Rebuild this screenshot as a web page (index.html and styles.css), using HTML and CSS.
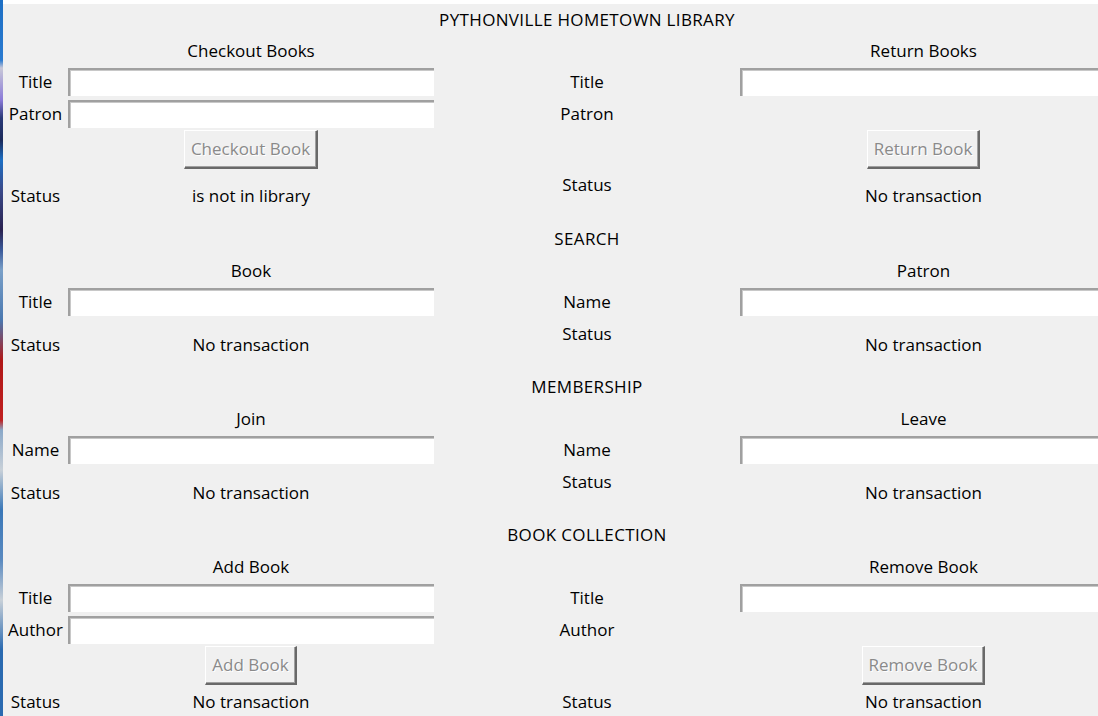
FILE: index.html
```html
<!DOCTYPE html>
<html>
<head>
<meta charset="utf-8">
<title>Pythonville Hometown Library</title>
<link rel="stylesheet" href="styles.css">
</head>
<body>
<div class="screen">
  <div class="desktop"></div>
  <main class="window">
    <section class="section section-first">
      <div class="row row-head"><span class="c2">PYTHONVILLE HOMETOWN LIBRARY</span></div>
      <div class="row row-sub"><span class="c1">Checkout Books</span><span class="c3">Return Books</span></div>
      <div class="row row-field"><span class="c0">Title</span><input class="entry c1" type="text"><span class="c2">Title</span><input class="entry c3" type="text"></div>
      <div class="row row-field"><span class="c0">Patron</span><input class="entry c1" type="text"><span class="c2">Patron</span></div>
      <div class="row row-btn"><button class="btn c1" disabled>Checkout Book</button><button class="btn c3" disabled>Return Book</button></div>
      <div class="row row-status"><span class="c0">Status</span><span class="c1">is not in library</span><span class="c2 mid-status">Status</span><span class="c3">No transaction</span></div>
    </section>

    <section class="section">
      <div class="row row-head"><span class="c2">SEARCH</span></div>
      <div class="row row-sub"><span class="c1">Book</span><span class="c3">Patron</span></div>
      <div class="row row-field"><span class="c0">Title</span><input class="entry c1" type="text"><span class="c2">Name</span><input class="entry c3" type="text"></div>
      <div class="row row-status"><span class="c0">Status</span><span class="c1">No transaction</span><span class="c2 mid-status">Status</span><span class="c3">No transaction</span></div>
    </section>

    <section class="section">
      <div class="row row-head"><span class="c2">MEMBERSHIP</span></div>
      <div class="row row-sub"><span class="c1">Join</span><span class="c3">Leave</span></div>
      <div class="row row-field"><span class="c0">Name</span><input class="entry c1" type="text"><span class="c2">Name</span><input class="entry c3" type="text"></div>
      <div class="row row-status"><span class="c0">Status</span><span class="c1">No transaction</span><span class="c2 mid-status">Status</span><span class="c3">No transaction</span></div>
    </section>

    <section class="section">
      <div class="row row-head"><span class="c2">BOOK COLLECTION</span></div>
      <div class="row row-sub"><span class="c1">Add Book</span><span class="c3">Remove Book</span></div>
      <div class="row row-field"><span class="c0">Title</span><input class="entry c1" type="text"><span class="c2">Title</span><input class="entry c3" type="text"></div>
      <div class="row row-field"><span class="c0">Author</span><input class="entry c1" type="text"><span class="c2">Author</span></div>
      <div class="row row-btn"><button class="btn c1" disabled>Add Book</button><button class="btn c3" disabled>Remove Book</button></div>
      <div class="row row-status row-last"><span class="c0">Status</span><span class="c1">No transaction</span><span class="c2">Status</span><span class="c3">No transaction</span></div>
    </section>
  </main>
</div>
</body>
</html>
```
FILE: styles.css
```css
html, body {
  margin: 0;
  padding: 0;
  width: 1098px;
  height: 716px;
  overflow: hidden;
  background: #f0f0f0;
}

.screen {
  display: flex;
  height: 716px;
}

.desktop {
  flex: 0 0 3px;
  background: linear-gradient(to bottom,
    #1d6fc4 0px, #2a7ad0 60px, #c8c8d8 68px, #8a7ad8 100px, #2a3a78 118px,
    #1b2a5a 140px, #1d6fc4 160px, #3a4a8a 190px, #2a2250 230px, #3a5a9a 250px,
    #7aa0c8 270px, #4a78b0 320px, #b01818 360px, #c02020 420px, #8aa8c8 430px,
    #c8d0d8 470px, #3a78b8 510px, #5a8ac0 560px, #c8d0d8 600px, #2a6ab0 650px,
    #2a6ab0 716px);
}

.window {
  flex: 1 1 auto;
  border-top: 4px solid #ffffff;
  background: #f0f0f0;
  font-family: "Open Sans", "Noto Sans", sans-serif;
  font-size: 17px;
  color: #000;
  min-width: 0;
}

.row {
  display: grid;
  grid-template-columns: 65px 366px 306px 367px;
  align-items: center;
  justify-items: center;
  line-height: 20px;
  white-space: nowrap;
}

.row-head { height: 32px; letter-spacing: 0.35px; }
.row-sub { height: 31px; }
.row-field { height: 32px; }
.row-btn { height: 39px; }
.row-status { height: 53px; }

.section-first .row-sub { height: 30px; }
.section-first .row-status { height: 54px; }

.c0 { grid-column: 1; }
.c1 { grid-column: 2; }
.c2 { grid-column: 3; }
.c3 { grid-column: 4; }

.mid-status {
  align-self: start;
  margin-top: 6px;
}

.row-last {
  align-items: start;
}
.row-last > span {
  margin-top: 7px;
}

.entry {
  box-sizing: border-box;
  width: 100%;
  height: 28px;
  margin: 0;
  padding: 0 4px;
  background: #ffffff;
  border-style: solid;
  border-width: 2px 0 0 2px;
  border-color: #a0a0a0;
  box-shadow: inset 1px 1px 0 #c8c8c8;
  outline: none;
  font: inherit;
}

.btn {
  box-sizing: border-box;
  height: 39px;
  margin: 0;
  padding: 0 6px 1px;
  background: #f0f0f0;
  font: inherit;
  color: #8a8a8a;
  border-style: solid;
  border-width: 1px 2px 2px 1px;
  border-color: #ffffff #696969 #696969 #ffffff;
  box-shadow: inset -1px -1px 0 #a0a0a0;
  text-shadow: 1px 1px 0 #ffffff;
}
```
